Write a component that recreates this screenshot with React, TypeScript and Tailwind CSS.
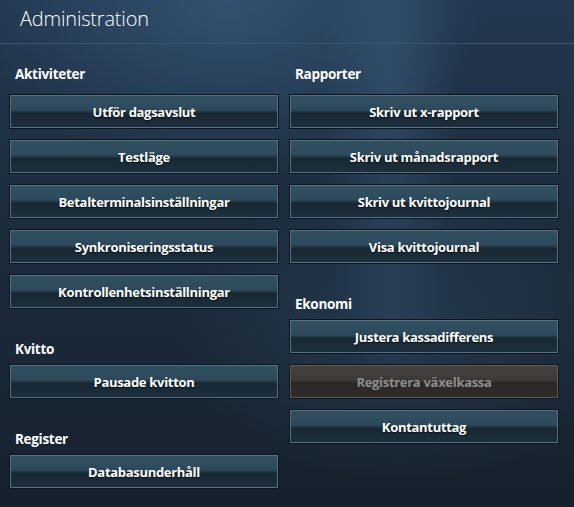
const left = [
  { title: 'Aktiviteter', items: ['Utför dagsavslut', 'Testläge', 'Betalterminalsinställningar', 'Synkroniseringsstatus', 'Kontrollenhetsinställningar'] },
  { title: 'Kvitto', items: ['Pausade kvitton'] },
  { title: 'Register', items: ['Databasunderhåll'] },
];

const right = [
  { title: 'Rapporter', items: ['Skriv ut x-rapport', 'Skriv ut månadsrapport', 'Skriv ut kvittojournal', 'Visa kvittojournal'] },
  { title: 'Ekonomi', items: ['Justera kassadifferens', 'Registrera växelkassa', 'Kontantuttag'] },
];

const disabled = ['Registrera växelkassa'];

function TileButton({ label }: { label: string }) {
  const off = disabled.includes(label);
  return (
    <button
      disabled={off}
      className={
        off
          ? 'h-[33px] w-full pt-[2px] border border-[#5b5a58] shadow-[0_0_0_1px_#12161a] bg-[linear-gradient(to_bottom,#44413f_0%,#3c3937_46%,#2b2826_54%,#2e2b29_100%)] text-[13px] tracking-[-0.3px] font-bold text-[#8d8d8d]'
          : 'h-[33px] w-full pt-[2px] border border-[#586f80] shadow-[0_0_0_1px_#0d1620] bg-[linear-gradient(to_bottom,#31505f_0%,#2c4a5c_44%,#182833_56%,#1c2f3c_100%)] text-[13px] tracking-[-0.3px] font-bold text-white [text-shadow:0_1px_1px_rgba(0,0,0,0.6)]'
      }
    >
      {label}
    </button>
  );
}

function Column({ sections }: { sections: { title: string; items: string[] }[] }) {
  return (
    <div className="flex flex-col">
      {sections.map((s, i) => (
        <div key={s.title} className={i === 0 ? '' : 'mt-[31px]'}>
          <h3 className={`pl-[5px] text-[13.5px] tracking-[-0.3px] leading-[20px] font-bold text-white ${i === 0 ? 'mb-[11px]' : 'mb-[6px]'}`}>
            {s.title}
          </h3>
          <div className="flex flex-col gap-[12px]">
            {s.items.map((it) => (
              <TileButton key={it} label={it} />
            ))}
          </div>
        </div>
      ))}
    </div>
  );
}

export default function App() {
  return (
    <div
      className="h-[507px] w-[574px] overflow-hidden bg-[#1a2837] bg-[radial-gradient(ellipse_45%_35%_at_40%_0%,rgba(62,102,138,0.55),transparent),radial-gradient(ellipse_12%_60%_at_68%_20%,rgba(70,110,145,0.35),transparent),radial-gradient(ellipse_40%_30%_at_70%_65%,rgba(55,90,120,0.35),transparent),linear-gradient(to_bottom,#233750_0%,#1c2c3d_45%,#16212d_100%)] font-['Open_Sans','Liberation_Sans',sans-serif]"
    >
      <div className="h-[44px] border-b border-[#3a566f] pl-[20px] pt-[5px]">
        <h1 className="text-[20px] tracking-[-0.2px] leading-[28px] font-light text-white">Administration</h1>
      </div>
      <div className="grid grid-cols-2 gap-[12px] pl-[10px] pr-[16px] pt-[20px]">
        <Column sections={left} />
        <Column sections={right} />
      </div>
    </div>
  );
}
